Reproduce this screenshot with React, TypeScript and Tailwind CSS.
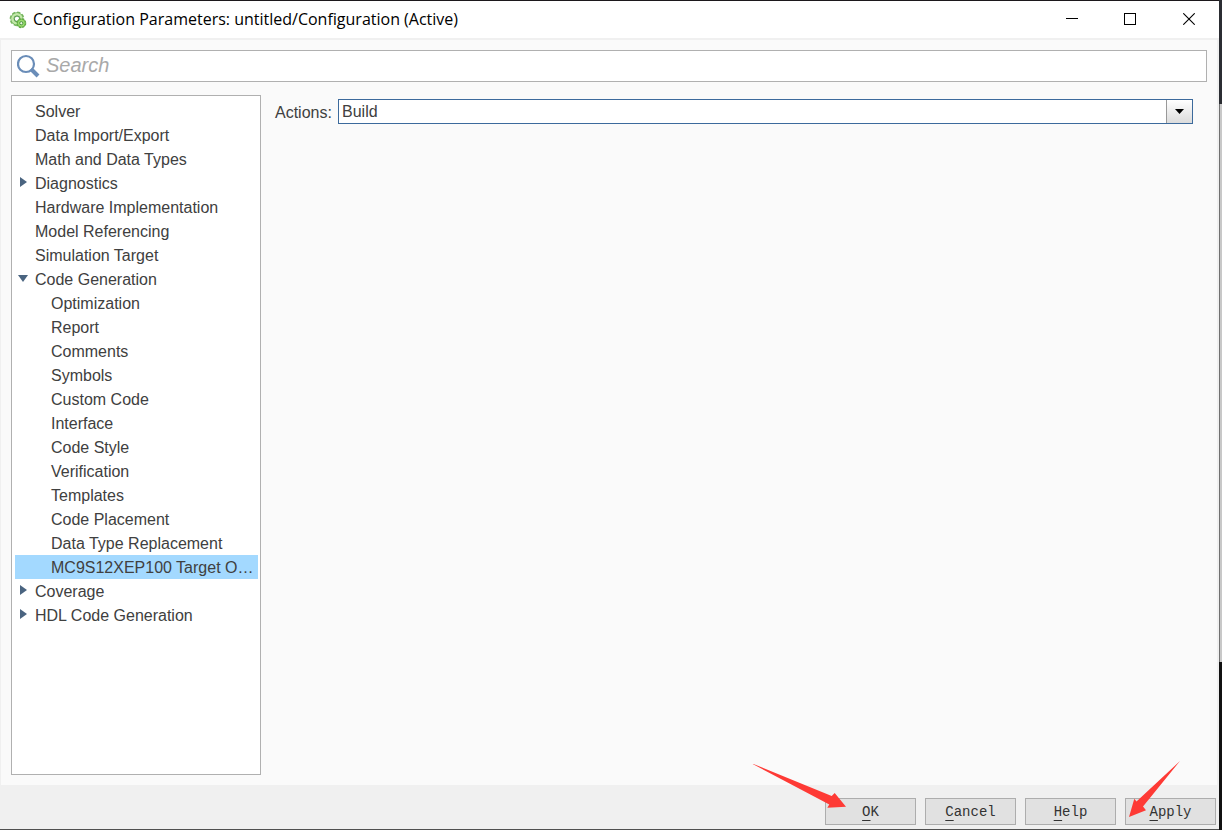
import { useState } from "react";

type Row = { label: string; level: 0 | 1; arrow?: "right" | "down" };

const rows: Row[] = [
  { label: "Solver", level: 0 },
  { label: "Data Import/Export", level: 0 },
  { label: "Math and Data Types", level: 0 },
  { label: "Diagnostics", level: 0, arrow: "right" },
  { label: "Hardware Implementation", level: 0 },
  { label: "Model Referencing", level: 0 },
  { label: "Simulation Target", level: 0 },
  { label: "Code Generation", level: 0, arrow: "down" },
  { label: "Optimization", level: 1 },
  { label: "Report", level: 1 },
  { label: "Comments", level: 1 },
  { label: "Symbols", level: 1 },
  { label: "Custom Code", level: 1 },
  { label: "Interface", level: 1 },
  { label: "Code Style", level: 1 },
  { label: "Verification", level: 1 },
  { label: "Templates", level: 1 },
  { label: "Code Placement", level: 1 },
  { label: "Data Type Replacement", level: 1 },
  { label: "MC9S12XEP100 Target O…", level: 1 },
  { label: "Coverage", level: 0, arrow: "right" },
  { label: "HDL Code Generation", level: 0, arrow: "right" },
];

function GearsIcon() {
  return (
    <svg width="18" height="18" viewBox="0 0 18 18" fill="none" aria-hidden="true">
      <circle cx="8" cy="7.8" r="6.6" stroke="#7fba66" strokeWidth="1.6" strokeDasharray="3.2 1.98" />
      <circle cx="8" cy="7.8" r="4.5" stroke="#62a94e" strokeWidth="4" />
      <circle cx="8" cy="7.8" r="4.6" stroke="#c3e8a9" strokeWidth="2.6" />
      <circle cx="8" cy="7.8" r="2.7" fill="#fff" stroke="#4a8f42" strokeWidth="0.9" />
      <circle cx="12.3" cy="12.2" r="4.4" stroke="#5aa63e" strokeWidth="1.2" strokeDasharray="2.3 1.15" />
      <circle cx="12.3" cy="12.2" r="4" fill="#9bdc6f" stroke="#5aa63e" strokeWidth="0.8" />
      <circle cx="12.3" cy="12.2" r="1.6" fill="#e9f8df" stroke="#3f8a35" strokeWidth="0.9" />
    </svg>
  );
}

function TitleBar() {
  return (
    <header className="flex h-[39px] shrink-0 items-center border-b-2 border-[#f0f0f0] bg-white pl-[9px]">
      <GearsIcon />
      <h1 className="ml-1.5 flex-1 truncate pb-0.5 font-['Open_Sans','Noto_Sans',sans-serif] text-base leading-6 text-black">
        Configuration Parameters: untitled/Configuration (Active)
      </h1>
      <div className="flex h-full items-center">
        <button aria-label="Minimize" className="flex h-full w-[58px] items-center justify-center pb-0.5">
          <svg width="12" height="12" viewBox="0 0 12 12" stroke="#000" shapeRendering="crispEdges">
            <path d="M0 5.5H12" />
          </svg>
        </button>
        <button aria-label="Maximize" className="flex h-full w-[58px] items-center justify-center pb-0.5">
          <svg width="12" height="12" viewBox="0 0 12 12" fill="none" stroke="#000" shapeRendering="crispEdges">
            <path d="M.5 .5H11.5V11.5H.5Z" />
          </svg>
        </button>
        <button aria-label="Close" className="flex h-full w-[60px] items-center justify-center pb-0.5">
          <svg width="12" height="12" viewBox="0 0 12 12" stroke="#000" strokeWidth="1.1">
            <path d="M.3 .3L11.7 11.7M11.7 .3L.3 11.7" />
          </svg>
        </button>
      </div>
    </header>
  );
}

function SearchBox() {
  return (
    <label
      htmlFor="search"
      aria-label="Search"
      className="flex h-8 shrink-0 items-center border border-[#b0b0b0] bg-white pl-[5px]"
    >
      <svg width="23" height="24" viewBox="0 0 23 24" fill="none" stroke="#6a8db8" aria-hidden="true">
        <circle cx="9" cy="10" r="8" strokeWidth="2.2" />
        <path d="M14 15L21 22" strokeWidth="4" />
      </svg>
      <input
        id="search"
        type="text"
        placeholder="Search"
        className="ml-1.5 h-7 min-w-0 flex-1 pb-0.5 text-xl italic text-[#404040] outline-none placeholder:text-[#a9a9a9]"
      />
    </label>
  );
}

function Tree() {
  const [selected, setSelected] = useState("MC9S12XEP100 Target O…");
  return (
    <nav className="w-[250px] shrink-0 border border-[#b0b0b0] bg-white pt-[3px] pr-0.5 pl-[3px]">
      <ul>
        {rows.map((row) => (
          <li key={row.label}>
            <button
              onClick={() => setSelected(row.label)}
              className={`flex h-6 w-full items-center text-left text-base ${
                row.label === selected ? "bg-[#a3d9ff]" : ""
              }`}
            >
              <span className={`flex shrink-0 justify-center pr-1 pb-0.5 ${row.level === 0 ? "w-5" : "w-9"}`}>
                {row.arrow === "right" && (
                  <svg width="7" height="10" viewBox="0 0 7 10" fill="#4a6480">
                    <path d="M0 0L7 5L0 10Z" />
                  </svg>
                )}
                {row.arrow === "down" && (
                  <svg width="10" height="7" viewBox="0 0 10 7" fill="#4a6480">
                    <path d="M0 0H10L5 7Z" />
                  </svg>
                )}
              </span>
              <span className="pt-0.5 leading-6 whitespace-nowrap">{row.label}</span>
            </button>
          </li>
        ))}
      </ul>
    </nav>
  );
}

function Actions() {
  return (
    <section className="flex min-w-0 flex-1 items-start pt-1 pr-3.5 pl-3.5">
      <label htmlFor="actions" className="mr-1.5 w-[57px] shrink-0 text-base leading-7">
        Actions:
      </label>
      <div className="relative min-w-0 flex-1">
        <select
          id="actions"
          className="block h-[25px] w-full appearance-none border border-[#3c6a9c] bg-white pr-7 pl-[3px] text-base leading-6 outline-none"
        >
          <option>Build</option>
        </select>
        <span className="pointer-events-none absolute inset-y-px right-px flex w-[26px] items-center justify-center border-l border-[#999] bg-linear-to-b from-white to-[#dcdcdc]">
          <svg width="9" height="5" viewBox="0 0 9 5" fill="#000">
            <path d="M0 0H9L4.5 5Z" />
          </svg>
        </span>
      </div>
    </section>
  );
}

const footerButtons = ["OK", "Cancel", "Help", "Apply"];

function Footer() {
  return (
    <footer className="flex h-11 shrink-0 items-end justify-end gap-[9px] bg-[#f0f0f0] pr-[3px] pb-1">
      {footerButtons.map((name) => (
        <div key={name} className="relative">
          <button className="flex h-[27px] w-[91px] items-center justify-center border border-[#adadad] bg-[#e1e1e1] font-['Liberation_Mono',monospace] text-sm text-[#333]">
            <span className="underline underline-offset-4">{name[0]}</span>
            {name.slice(1)}
          </button>
          {name === "OK" && (
            <svg
              className="pointer-events-none absolute -top-[35px] -left-[73px]"
              width="95"
              height="46"
              viewBox="752 763 95 46"
              fill="#fe3a35"
              aria-hidden="true"
            >
              <path d="M752.7 764L753.5 764L831.7 796L834.7 793L846 806.7L827.3 807.7L829.3 804.5Z" />
            </svg>
          )}
          {name === "Apply" && (
            <svg
              className="pointer-events-none absolute -top-[38px] left-[3px]"
              width="53"
              height="58"
              viewBox="1128 760 53 58"
              fill="#fe3a35"
              aria-hidden="true"
            >
              <path d="M1180 761L1143 806.5L1146 810.3L1129 817L1134.3 798.7L1136.5 801.5Z" />
            </svg>
          )}
        </div>
      ))}
    </footer>
  );
}

export default function App() {
  return (
    <div className="flex h-screen bg-[#303030] font-['Liberation_Sans',Arial,sans-serif] text-[#404040]">
      <main className="flex min-w-0 flex-1 flex-col border-t border-b border-t-[#1c181c] border-b-[#505050] bg-[#fafafa]">
        <TitleBar />
        <div className="flex min-h-0 flex-1 flex-col gap-[13px] border-r-2 border-l border-[#f0f0f0] p-2.5">
          <SearchBox />
          <div className="flex min-h-0 flex-1">
            <Tree />
            <Actions />
          </div>
        </div>
        <Footer />
      </main>
      <div className="flex w-[3px] shrink-0 flex-col" aria-hidden="true">
        <div className="h-[104px] bg-[#2b2d32]" />
        <div className="flex-1 border-l border-[#707070] bg-[#c8c8c8]" />
        <div className="h-[168px] bg-[#111]" />
      </div>
    </div>
  );
}
